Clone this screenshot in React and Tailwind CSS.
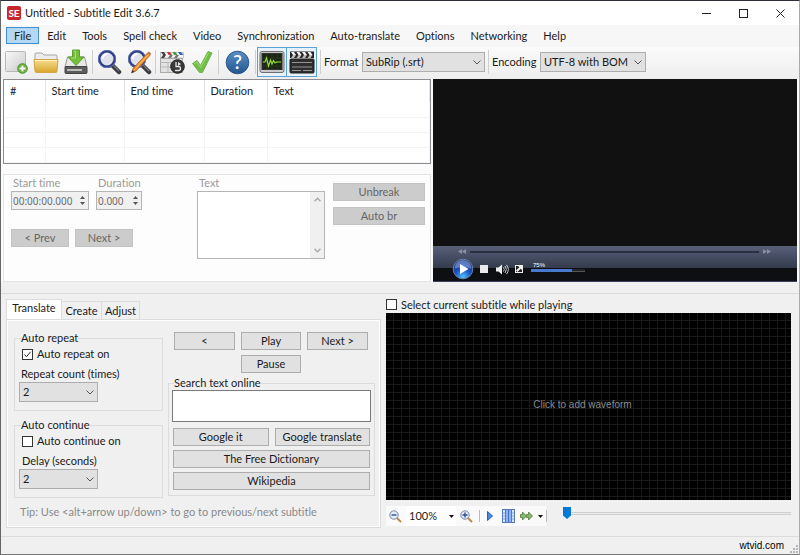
import React from "react";

const menuItems = [
  "File",
  "Edit",
  "Tools",
  "Spell check",
  "Video",
  "Synchronization",
  "Auto-translate",
  "Options",
  "Networking",
  "Help",
];

const columns = [
  { name: "#", width: "w-[41px]" },
  { name: "Start time", width: "w-[79px]" },
  { name: "End time", width: "w-[80px]" },
  { name: "Duration", width: "w-[63px]" },
  { name: "Text", width: "" },
];

/* === Toolbar icons === */
function NewIcon() {
  return (
    <svg width="24" height="24" viewBox="0 0 24 24">
      <defs>
        <linearGradient id="paper" x1="0" y1="0" x2="1" y2="1">
          <stop offset="0" stopColor="#fafafa" />
          <stop offset="1" stopColor="#c9c9c9" />
        </linearGradient>
      </defs>
      <rect x="1.5" y="1.5" width="20" height="20" rx="1" fill="url(#paper)" stroke="#b8b8b8" />
      <circle cx="18.5" cy="18.5" r="4.8" fill="#6cb33f" stroke="#4b8f2a" />
      <path d="M18.5 15.5v6M15.5 18.5h6" stroke="#fff" strokeWidth="1.8" />
    </svg>
  );
}

function OpenIcon() {
  return (
    <svg width="26" height="24" viewBox="0 0 26 24">
      <defs>
        <linearGradient id="folder" x1="0" y1="0" x2="0" y2="1">
          <stop offset="0" stopColor="#f5dd92" />
          <stop offset="1" stopColor="#d9a62c" />
        </linearGradient>
      </defs>
      <path d="M2 11V4q0-1 1-1h6l2 2h12q1 0 1 1v5z" fill="#ececec" stroke="#a5a5a5" />
      <path d="M1 9.500h24l-1 11.500q0 1.500-1.500 1.500h-19Q2 22.500 2 21z" fill="url(#folder)" stroke="#cfa646" />
      <path d="M2 10.500h22" stroke="#fdf0bd" />
    </svg>
  );
}

function SaveIcon() {
  return (
    <svg width="24" height="26" viewBox="0 0 24 26">
      <path d="M3.500 8h17L23 18H1z" fill="#e8e8e8" stroke="#999" />
      <rect x="1" y="17.500" width="22" height="7" rx="1" fill="#5c5c5c" stroke="#444" />
      <path d="M3 21h15" stroke="#bbb" strokeWidth="2" />
      <path d="M8.500 1h7v7H20l-8 8.500L4 8h4.500z" fill="#76bf3c" stroke="#58a028" />
      <path d="M9.500 2h2v7H7" fill="none" stroke="#a9dd7b" />
    </svg>
  );
}

function FindIcon({ pencil = false }) {
  return (
    <svg width="25" height="26" viewBox="0 0 25 26">
      <path d="M15 16l7 7" stroke="#3b3b40" strokeWidth="4.500" strokeLinecap="round" />
      <path d="M15 15l7 7" stroke="#77777d" strokeWidth="1.200" />
      <circle cx="10" cy="10" r="7.800" fill="#dde2ec" stroke="#2d3c83" strokeWidth="2.600" />
      <circle cx="10" cy="10" r="8.600" fill="none" stroke="#5e70b5" />
      <path d="M5.500 10q.500-4.500 5-5" stroke="#fff" strokeWidth="1.500" fill="none" />
      {pencil && (
        <g>
          <path d="M6 19.500L20.500 4l2.500 2.200L9 22l-4.500 2z" fill="#ee9030" stroke="#ad5e1d" strokeWidth=".8" />
          <path d="M20.500 4l1.300-1.400 2.500 2.200L23 6.200z" fill="#bf6a3b" />
          <path d="M7.500 20.500L21.500 5.500" stroke="#ffc477" />
          <path d="M4.500 24l1-3 2 1.700z" fill="#333" />
        </g>
      )}
    </svg>
  );
}

function ClapperIcon() {
  return (
    <svg width="26" height="24" viewBox="0 0 26 24">
      <rect x="1.500" y="8.500" width="22" height="14" fill="#e2e2e2" stroke="#aaa" />
      <path d="M2 12.500h21M2 17h21M9 12v10" stroke="#b7b7b7" />
      <rect x="1.500" y="2.500" width="23" height="5.500" fill="#f5f5f5" stroke="#aaa" strokeWidth=".6" />
      <path d="M2 2h3l2 3-2 3H2l2-3z" fill="#444" />
      <path d="M8 2h3l2 3H9.500z" fill="#c93a35" />
      <path d="M13.500 2h3l2 3H15z" fill="#3d9b42" />
      <path d="M19 2h3l2.500 3h-3.500z" fill="#3562b8" />
      <path d="M9 8l2-3h3l-2 3zM15 8l2-3h3l-2 3z" fill="#777" />
      <circle cx="18.500" cy="16.500" r="6.800" fill="#393939" stroke="#222" />
      <path d="M17 12v4.500h2.500a2 2 0 0 1 0 4H16" fill="none" stroke="#e4e4e4" strokeWidth="1.300" />
      <path d="M19 12l3 2-3 2z" fill="#e4e4e4" />
    </svg>
  );
}

function CheckIcon() {
  return (
    <svg width="22" height="24" viewBox="0 0 22 24">
      <path d="M1.500 13.500l4.500-3 3.500 5L17 1.500l4 1.500-9.500 19.500h-3z" fill="#6fbe45" stroke="#6fb350" strokeLinejoin="round" />
      <path d="M3 14l3-2 3.500 5.500L17.500 3" fill="none" stroke="#9cdb76" />
    </svg>
  );
}

function HelpIcon() {
  return (
    <svg width="25" height="25" viewBox="0 0 25 25">
      <defs>
        <linearGradient id="help" x1="0" y1="0" x2="0" y2="1">
          <stop offset="0" stopColor="#5c8fc8" />
          <stop offset="1" stopColor="#23568f" />
        </linearGradient>
      </defs>
      <circle cx="12.500" cy="12.500" r="11.300" fill="url(#help)" stroke="#2b5788" />
      <text x="12.500" y="19" textAnchor="middle" fontSize="19" fontWeight="600" fill="#fff">?</text>
    </svg>
  );
}

function WaveIcon() {
  return (
    <svg width="26" height="24" viewBox="0 0 26 24">
      <rect x="1" y="1.500" width="24" height="21" rx="2" fill="#c9c9c9" stroke="#6d6d6d" />
      <rect x="3" y="3.500" width="20" height="16" fill="#1c2415" stroke="#333" />
      <path d="M3 8h20M3 12h20M3 16h20M8 4v15M13 4v15M18 4v15" stroke="#33442a" strokeWidth=".5" />
      <path d="M4 12h2l1.500-4 2 8 2-6 1.500 4 1.500-3.500 1.500 2.500 1.500-1h4.500" fill="none" stroke="#93dd32" strokeWidth="1.200" />
    </svg>
  );
}

function FilmIcon() {
  return (
    <svg width="26" height="24" viewBox="0 0 26 24">
      <rect x="1" y="9" width="24" height="14" rx="1" fill="#2e2e2e" stroke="#1c1c1c" />
      <rect x="1" y="1.500" width="24" height="6.500" fill="#252525" />
      <path d="M2 2h3l2 3H4zM7.500 2h3l2 3h-3zM13 2h3l2 3h-3zM18.500 2h3l2 3h-3z" fill="#f2f2f2" />
      <path d="M4 5h3L5 8H2zM9.500 5h3l-2 3h-3zM15 5h3l-2 3h-3zM20.500 5h3l-2 3h-3z" fill="#bdbdbd" />
      <path d="M3 12.500h20M3 17h20M3 20.500h9M14 20.500h9" stroke="#a0a0a0" strokeWidth=".9" />
    </svg>
  );
}

function Divider({ className = "mx-px" }) {
  return <span className={`h-6 w-px shrink-0 bg-[#cfcfcf] ${className}`} />;
}

function ToolButton({ label, children }) {
  return (
    <button aria-label={label} className="flex h-7 w-[30px] shrink-0 items-center justify-center">
      {children}
    </button>
  );
}

function Combo({ id, options, className = "" }) {
  return (
    <div className={`relative ${className}`}>
      <select
        id={id}
        className="block h-5 w-full appearance-none border border-[#adadad] bg-[#e1e1e1] pl-[3px] leading-4"
      >
        {options.map((o) => (
          <option key={o}>{o}</option>
        ))}
      </select>
      <svg className="pointer-events-none absolute right-1 top-2" width="8" height="5" viewBox="0 0 8 5">
        <path d="M.5.5L4 4 7.500.5" fill="none" stroke="#555" />
      </svg>
    </div>
  );
}

function Button({ children, disabled = false, className = "" }) {
  return (
    <button
      disabled={disabled}
      className={`h-[18px] border text-center leading-4 ${
        disabled ? "border-[#c3c3c3] bg-[#cccccc] text-[#666]" : "border-[#adadad] bg-[#e1e1e1]"
      } ${className}`}
    >
      {children}
    </button>
  );
}

function Spinner({ id, label, value, className }) {
  return (
    <div className={className}>
      <label htmlFor={id} className="block pl-[2px] leading-4 text-[#9a9a9a]">
        {label}
      </label>
      <div className="flex h-[19px] border border-[#b5b5b5] bg-[#f0f0f0]">
        <input
          id={id}
          disabled
          defaultValue={value}
          className="w-full min-w-0 flex-1 pl-px font-['Noto_Sans'] text-[10px] text-[#6d6d6d]"
        />
        <div className="flex w-[11px] shrink-0 flex-col justify-evenly">
          <button disabled aria-label={`Increase ${label}`}>
            <svg width="5" height="3" viewBox="0 0 5 3" className="mx-auto"><path d="M0 3L2.500 0 5 3z" fill="#555" /></svg>
          </button>
          <button disabled aria-label={`Decrease ${label}`}>
            <svg width="5" height="3" viewBox="0 0 5 3" className="mx-auto"><path d="M0 0l2.500 3L5 0z" fill="#555" /></svg>
          </button>
        </div>
      </div>
    </div>
  );
}

function Check({ label, checked = false }) {
  return (
    <label className="flex items-center gap-1 leading-4">
      <span className="relative flex">
        <input
          type="checkbox"
          defaultChecked={checked}
          className="peer size-[11px] appearance-none border border-[#333] bg-white"
        />
        <svg
          className="pointer-events-none absolute inset-0 hidden peer-checked:block"
          width="11"
          height="11"
          viewBox="0 0 11 11"
        >
          <path d="M2.500 5.500l2 2.200 4.200-5" fill="none" stroke="#222" />
        </svg>
      </span>
      {label}
    </label>
  );
}

function TitleBar() {
  return (
    <header className="flex h-6 items-center bg-white pl-[6px] pr-[14px]">
      <svg width="14" height="14" viewBox="0 0 14 14">
        <rect width="14" height="14" rx="2" fill="#c8262c" />
        <text x="7" y="10.500" textAnchor="middle" fontSize="10" fontWeight="700" fill="#fff">SE</text>
      </svg>
      <h1 className="ml-1 flex-1">Untitled - Subtitle Edit 3.6.7</h1>
      <div className="flex items-center gap-7">
        <button aria-label="Minimize">
          <svg width="9" height="9" viewBox="0 0 9 9"><path d="M0 4.500h9" stroke="#222" /></svg>
        </button>
        <button aria-label="Maximize">
          <svg width="9" height="9" viewBox="0 0 9 9"><rect x=".5" y=".5" width="8" height="8" fill="none" stroke="#222" /></svg>
        </button>
        <button aria-label="Close">
          <svg width="9" height="9" viewBox="0 0 9 9"><path d="M.5.5l8 8M8.500.5l-8 8" stroke="#222" /></svg>
        </button>
      </div>
    </header>
  );
}

function Toolbar() {
  return (
    <div className="flex h-8 items-center bg-linear-to-b from-[#fbfbfb] to-[#ededed] pb-[2px]">
      <ToolButton label="New"><NewIcon /></ToolButton>
      <ToolButton label="Open"><OpenIcon /></ToolButton>
      <ToolButton label="Save"><SaveIcon /></ToolButton>
      <Divider />
      <ToolButton label="Find"><FindIcon /></ToolButton>
      <ToolButton label="Replace"><FindIcon pencil /></ToolButton>
      <Divider />
      <ToolButton label="Fix common errors"><ClapperIcon /></ToolButton>
      <ToolButton label="Spell check"><CheckIcon /></ToolButton>
      <Divider />
      <div className="px-[2px]">
        <ToolButton label="Help"><HelpIcon /></ToolButton>
      </div>
      <Divider />
      <button aria-label="Show waveform" className="flex h-[30px] w-[30px] shrink-0 items-center justify-center border border-[#5aa3d6] bg-[#e8f1f8]">
        <WaveIcon />
      </button>
      <button aria-label="Show video" className="flex h-[30px] w-[30px] shrink-0 items-center justify-center border border-l-0 border-[#5aa3d6] bg-[#e8f1f8]">
        <FilmIcon />
      </button>
      <Divider className="mx-[3px]" />
      <label htmlFor="format" className="w-[38px]">Format</label>
      <Combo id="format" options={["SubRip (.srt)"]} className="w-[123px]" />
      <Divider className="mx-[3px]" />
      <label htmlFor="encoding" className="w-12">Encoding</label>
      <Combo id="encoding" options={["UTF-8 with BOM"]} className="w-[106px]" />
    </div>
  );
}

function SubtitleList() {
  return (
    <div className="h-[85px] border border-[#8c8c92] bg-white">
      <table className="w-full table-fixed border-collapse">
        <thead>
          <tr className="h-[22px]">
            {columns.map((c) => (
              <th key={c.name} className={`${c.width} border-r border-[#e3e3e3] pl-[6px] text-left font-normal`}>
                {c.name}
              </th>
            ))}
          </tr>
        </thead>
        <tbody>
          {[0, 1, 2, 3].map((row) => (
            <tr key={row} className="h-[15px]">
              {columns.map((c) => (
                <td key={c.name} className="border-b border-r border-[#f4f4f4]" />
              ))}
            </tr>
          ))}
        </tbody>
      </table>
    </div>
  );
}

function EditPanel() {
  return (
    <div className="mt-[10px] flex h-[108px] border border-[#e4e4e4] bg-[#fdfdfd] pl-[7px] pr-[5px]">
      <div className="w-[186px]">
        <div className="flex gap-[7px]">
          <Spinner id="start" label="Start time" value="00:00:00.000" className="w-[78px]" />
          <Spinner id="duration" label="Duration" value="0.000" className="w-[46px]" />
        </div>
        <div className="mt-[19px] flex gap-[6px]">
          <Button disabled className="w-[58px]">&lt; Prev</Button>
          <Button disabled className="w-[58px]">Next &gt;</Button>
        </div>
      </div>
      <div className="w-32">
        <label htmlFor="subtitle" className="block pl-[2px] leading-4 text-[#9a9a9a]">Text</label>
        <div className="flex h-[68px] border border-[#b5b5b5] bg-white">
          <textarea id="subtitle" disabled className="min-w-0 flex-1 resize-none" />
          <div className="flex w-[14px] shrink-0 flex-col items-center justify-between bg-[#f0f0f0] py-[5px]">
            <svg width="7" height="5" viewBox="0 0 7 5"><path d="M.5 4.200l3-3 3 3" fill="none" stroke="#aaa" strokeWidth="1.500" /></svg>
            <svg width="7" height="5" viewBox="0 0 7 5"><path d="M.5.8l3 3 3-3" fill="none" stroke="#aaa" strokeWidth="1.500" /></svg>
          </div>
        </div>
      </div>
      <div className="ml-2 mt-2 flex flex-1 flex-col gap-[6px]">
        <Button disabled>Unbreak</Button>
        <Button disabled>Auto br</Button>
      </div>
    </div>
  );
}

function VideoPlayer() {
  return (
    <section className="ml-[2px] mr-[2px] flex flex-1 flex-col bg-[#111]">
      <div className="flex-1" />
      <div className="h-9 border-b border-[#3a4260] bg-[linear-gradient(#596078_0,#434b61_12px,#343b4c_22px,#0d0f13_22px,#0d0f13_100%)] pl-[25px] pr-[26px]">
        <div className="flex h-[11px] items-center gap-1">
          <svg width="8" height="5" viewBox="0 0 8 5"><path d="M4 0v5L0 2.500zM8 0v5L4 2.500z" fill="#8990a3" /></svg>
          <div className="h-[2px] flex-1 bg-[#2b3041]" />
          <svg width="8" height="5" viewBox="0 0 8 5"><path d="M0 0v5l4-2.500zM4 0v5l4-2.500z" fill="#8990a3" /></svg>
        </div>
        <div className="-ml-[6px] flex h-[24px] items-center">
          <button aria-label="Play video">
            <svg width="22" height="22" viewBox="0 0 22 22">
              <defs>
                <radialGradient id="orb" cx=".5" cy=".9" r=".8">
                  <stop offset="0" stopColor="#4cc4ff" />
                  <stop offset=".5" stopColor="#1c52c4" />
                  <stop offset="1" stopColor="#16306f" />
                </radialGradient>
              </defs>
              <circle cx="11" cy="11" r="9.800" fill="url(#orb)" stroke="#6f81a8" />
              <path d="M2.500 10.500a8.500 8.500 0 0 1 17 0q-8.500-3-17 0z" fill="#8ca9e6" opacity=".6" />
              <path d="M8 6v10l8.500-5z" fill="#fff" />
            </svg>
          </button>
          <button aria-label="Stop video" className="ml-[6px] size-2 bg-[#e9e9ee]" />
          <button aria-label="Mute" className="ml-2">
            <svg width="13" height="11" viewBox="0 0 13 11">
              <path d="M0 3.500h2.500L6 .5v10L2.500 7.500H0z" fill="#eee" />
              <path d="M7.500 3.500q1.500 2 0 4M9 2q2.700 3.500 0 7M10.500.8q3.700 4.700 0 9.400" fill="none" stroke="#ddd" strokeWidth=".9" />
            </svg>
          </button>
          <button aria-label="Fullscreen" className="ml-[6px]">
            <svg width="8" height="8" viewBox="0 0 8 8">
              <rect x=".5" y=".5" width="7" height="7" fill="#222" stroke="#eee" />
              <path d="M3 1h4v4L5.700 3.700 2.500 7 1 5.500l3.300-3.200z" fill="#eee" />
            </svg>
          </button>
          <div className="ml-2 w-[54px] pb-[5px]">
            <span className="block pl-[2px] font-['Liberation_Sans'] text-[6px] leading-[7px] text-white">75%</span>
            <div className="h-[3px] border-b border-[#555] bg-[#22252d]">
              <div className="h-[3px] w-3/4 bg-[#4879ce]" />
            </div>
          </div>
        </div>
      </div>
    </section>
  );
}

function TabPanel() {
  return (
    <section className="ml-[5px] mt-[5px] w-[375px] shrink-0">
      <div role="tablist" className="flex items-end">
        <button role="tab" aria-selected="true" className="h-5 w-14 border border-b-0 border-[#dcdcdc] bg-white pb-1 leading-4">
          Translate
        </button>
        <button role="tab" aria-selected="false" className="h-[18px] w-10 border border-b-0 border-l-0 border-[#dcdcdc] leading-4">
          Create
        </button>
        <button role="tab" aria-selected="false" className="h-[18px] w-[38px] border border-b-0 border-l-0 border-[#dcdcdc] leading-4">
          Adjust
        </button>
      </div>
      <div className="border border-[#dcdcdc] bg-white p-px">
        <div className="bg-[#f0f0f0] pb-[6px] pl-[6px] pr-1 pt-[11px]">
          <div className="flex gap-[5px]">
            <div className="flex w-[149px] flex-col gap-2">
              <fieldset className="h-[79px] border border-[#dcdcdc] pl-1">
                <legend className="ml-[2px] leading-3">Auto repeat</legend>
                <div className="pl-[3px] pt-[2px]">
                  <Check label="Auto repeat on" checked />
                </div>
                <label htmlFor="repeat" className="block pl-[2px] pt-1 leading-4">Repeat count (times)</label>
                <Combo id="repeat" options={["2", "3", "4"]} className="w-[79px]" />
              </fieldset>
              <fieldset className="h-[79px] border border-[#dcdcdc] pl-1">
                <legend className="ml-[2px] leading-3">Auto continue</legend>
                <div className="pl-[3px] pt-[2px]">
                  <Check label="Auto continue on" />
                </div>
                <label htmlFor="delay" className="block pl-[3px] pt-1 leading-4">Delay (seconds)</label>
                <Combo id="delay" options={["2", "3", "4"]} className="w-[79px]" />
              </fieldset>
            </div>
            <div className="flex-1">
              <div className="grid grid-cols-3 gap-x-[6px] gap-y-[5px] pl-[6px] pr-[7px]">
                <Button>&lt;</Button>
                <Button>Play</Button>
                <Button>Next &gt;</Button>
                <Button className="col-start-2">Pause</Button>
              </div>
              <fieldset className="mt-1 border border-[#dcdcdc] px-[3px] pb-[5px]">
                <legend className="ml-[2px] leading-3">
                  <label htmlFor="search">Search text online</label>
                </legend>
                <textarea id="search" className="mt-px block h-8 w-full resize-none border border-[#7a7a7a] bg-white px-1" />
                <div className="mt-[6px] grid grid-cols-2 gap-x-[6px] gap-y-1 px-px">
                  <Button>Google it</Button>
                  <Button>Google translate</Button>
                  <Button className="col-span-2">The Free Dictionary</Button>
                  <Button className="col-span-2">Wikipedia</Button>
                </div>
              </fieldset>
            </div>
          </div>
          <p className="mt-[6px] pl-[6px] leading-4 text-[#8a8a8a]">
            Tip: Use &lt;alt+arrow up/down&gt; to go to previous/next subtitle
          </p>
        </div>
      </div>
    </section>
  );
}

function ZoomIcon({ plus = false }) {
  return (
    <svg width="13" height="13" viewBox="0 0 13 13">
      <path d="M8 8l4 4" stroke="#b98c4d" strokeWidth="2" />
      <circle cx="5" cy="5" r="4.200" fill="#e4eefb" stroke="#77869d" />
      <path d={plus ? "M2.500 5h5M5 2.500v5" : "M2.500 5h5"} stroke="#2c4f94" strokeWidth="1.400" />
    </svg>
  );
}

function DropArrow() {
  return (
    <svg width="5" height="3" viewBox="0 0 5 3"><path d="M0 0h5L2.500 3z" fill="#111" /></svg>
  );
}

function WaveformPanel() {
  return (
    <section className="ml-[5px] mr-2 mt-[2px] flex min-w-0 flex-1 flex-col">
      <div className="flex h-[17px] items-center">
        <Check label="Select current subtitle while playing" />
      </div>
      <button className="flex h-[187px] w-full items-center justify-center bg-black bg-[linear-gradient(90deg,transparent_7px,#191919_7px),linear-gradient(transparent_7px,#191919_7px)] bg-size-[8px_8px] pb-1 pr-3 font-['Liberation_Sans'] text-[10px] text-[#8c8c8c]">
        Click to add waveform
      </button>
      <div className="mt-[6px] flex h-5 items-center">
        <div className="flex h-5 w-[160px] shrink-0 items-center bg-[#fafafa] pl-[3px]">
          <button aria-label="Zoom out"><ZoomIcon /></button>
          <button className="ml-1 flex h-5 w-[50px] items-center justify-between bg-white pl-[3px] pr-[2px]">
            100%
            <DropArrow />
          </button>
          <button aria-label="Zoom in" className="ml-1"><ZoomIcon plus /></button>
          <span className="ml-[6px] h-3 w-px bg-[#bbb]" />
          <button aria-label="Play waveform" className="ml-[7px]">
            <svg width="6" height="10" viewBox="0 0 6 10"><path d="M.5.5L5.500 5 .5 9.500z" fill="#4d86e3" stroke="#2760bf" /></svg>
          </button>
          <button aria-label="Center on position" className="ml-[9px]">
            <svg width="13" height="14" viewBox="0 0 13 14">
              <rect x=".5" y=".5" width="12" height="13" fill="#dce8fa" stroke="#5279b8" />
              <path d="M3.500 0v14M9.500 0v14" stroke="#5279b8" />
              <rect x="4" y="1" width="5" height="12" fill="#8fb3ee" />
              <path d="M6.500 1v12" stroke="#3f6fc4" />
              <path d="M1 4h2M1 7h2M1 10h2M10 4h2M10 7h2M10 10h2" stroke="#86a6d8" />
            </svg>
          </button>
          <button aria-label="Playback speed" className="ml-[5px] flex items-center gap-[5px]">
            <svg width="13" height="10" viewBox="0 0 13 10">
              <path d="M.5 3.500h2V1l4 4-4 4V6.500h-2z" fill="#8cb86b" stroke="#4c7a38" strokeWidth=".8" />
              <path d="M6.500 3.500h2V1l4 4-4 4V6.500h-2z" fill="#8cb86b" stroke="#4c7a38" strokeWidth=".8" />
            </svg>
            <DropArrow />
          </button>
        </div>
        <span className="h-3 w-px bg-[#bbb]" />
        <input
          type="range"
          aria-label="Position"
          defaultValue="0"
          className="ml-4 h-3 mb-[6px] min-w-0 flex-1 appearance-none bg-[linear-gradient(#e7eaea,#e7eaea),linear-gradient(#cfcfcf,#cfcfcf)] bg-size-[100%_1px,100%_3px] bg-center bg-no-repeat [&::-webkit-slider-thumb]:h-3 [&::-webkit-slider-thumb]:w-2 [&::-webkit-slider-thumb]:appearance-none [&::-webkit-slider-thumb]:bg-[#0078d7] [&::-webkit-slider-thumb]:[clip-path:polygon(0_0,100%_0,100%_70%,50%_100%,0_70%)]"
        />
      </div>
    </section>
  );
}

function App() {
  return (
    <div className="flex min-h-screen flex-col border-x border-b border-t border-b-[#777] border-l-[#666] border-r-[#aaa] border-t-[#2c2f3a] bg-[#f0f0f0] font-['Lato','Noto_Sans',sans-serif] text-[11px] leading-4 text-[#1a1a1a] [font-variant-ligatures:none]">
      <TitleBar />
      <nav className="flex h-[22px] items-center bg-[#f7f7f7] pb-px pl-[5px]">
        {menuItems.map((item) => (
          <button
            key={item}
            className={`h-[17px] border px-[7px] leading-4 ${item === "File" ? "border-[#3f8fd0] bg-[#b5d7f3]" : "border-transparent"}`}
          >
            {item}
          </button>
        ))}
      </nav>
      <Toolbar />

      {/* === List, editor and video === */}
      <main>
        <div className="flex bg-[#fbfbfb] pl-[2px]">
          <div className="w-[428px] shrink-0">
            <SubtitleList />
            <EditPanel />
          </div>
          <VideoPlayer />
        </div>

        {/* === Translate tabs and waveform === */}
        <div className="mt-[11px] flex border-t border-[#dcdcdc]">
          <TabPanel />
          <WaveformPanel />
        </div>
      </main>

      {/* === Status bar === */}
      <footer className="mt-auto flex h-[18px] items-center justify-end gap-1 border-t border-[#dcdcdc] pr-px">
        <span className="font-['Liberation_Sans'] text-[10px] text-black">wtvid.com</span>
        <svg width="10" height="10" viewBox="0 0 10 10" className="self-end">
          <path d="M8 1h2v2H8zM8 4h2v2H8zM8 7h2v2H8zM5 4h2v2H5zM5 7h2v2H5zM2 7h2v2H2z" fill="#b5b5b5" />
        </svg>
      </footer>
    </div>
  );
}

export default App;
